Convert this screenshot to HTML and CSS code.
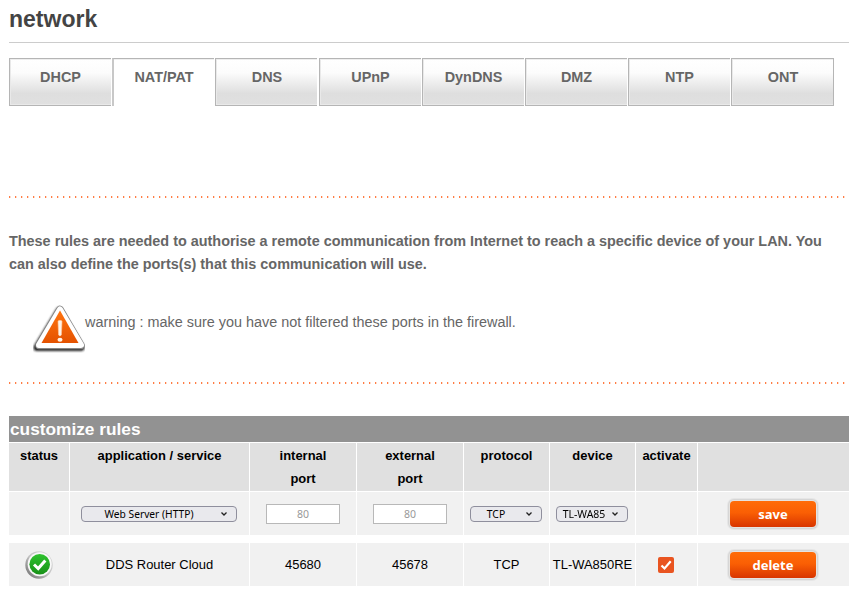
FILE: index.html
```html
<!DOCTYPE html>
<html lang="en">
<head>
<meta charset="utf-8">
<title>network</title>
<link rel="stylesheet" href="styles.css">
</head>
<body>
<h1>network</h1>
<nav class="tabs">
  <a>DHCP</a><a class="active">NAT/PAT</a><a class="after">DNS</a><a>UPnP</a><a>DynDNS</a><a>DMZ</a><a>NTP</a><a>ONT</a>
</nav>
<section class="intro">
  <svg class="dots" width="836" height="2"><path d="M0 1H836"/><path class="edge" d="M1 1H836"/></svg>
  <p class="lead">These rules are needed to authorise a remote communication from Internet to reach a specific device of your LAN. You can also define the ports(s) that this communication will use.</p>
  <div class="warning">
    <svg width="52" height="52" viewBox="0 0 52 52">
      <defs>
        <linearGradient id="wg" x1="0" y1="0" x2="0" y2="1"><stop offset="0" stop-color="#ff7410"/><stop offset="1" stop-color="#e45200"/></linearGradient>
        <filter id="blur" x="-20%" y="-20%" width="140%" height="140%"><feGaussianBlur stdDeviation="1.2"/></filter>
      </defs>
      <path d="M26 6 L48 42.500 H4 Z" fill="#222" stroke="#222" stroke-width="7" stroke-linejoin="round" filter="url(#blur)"/>
      <path d="M27 4.500 L48 40.500 H6 Z" fill="#888" stroke="#888" stroke-width="7.500" stroke-linejoin="round"/>
      <path d="M27 4.500 L48 40 H6 Z" fill="#fff" stroke="#fff" stroke-width="6" stroke-linejoin="round"/>
      <path d="M27 5.500 L45.500 38 H8.500 Z" fill="url(#wg)"/>
      <path d="M25 16 Q27 14.500 29 16 L28.400 30 Q27 32 25.600 30 Z" fill="#fff4e8" stroke="#ffc9a0" stroke-width=".6"/>
      <ellipse cx="27" cy="34.800" rx="2.500" ry="2" fill="#fff4e8"/>
    </svg>
    <span>warning : make sure you have not filtered these ports in the firewall.</span>
  </div>
  <svg class="dots" width="836" height="2"><path d="M0 1H836"/><path class="edge" d="M1 1H836"/></svg>
</section>
<h2>customize rules</h2>
<div class="row head">
  <div>status</div><div>application / service</div><div>internal<br>port</div><div>external<br>port</div><div>protocol</div><div>device</div><div>activate</div><div></div>
</div>
<div class="row">
  <div></div>
  <div><span class="select wide"><span>Web Server (HTTP)</span><svg width="8" height="6" viewBox="0 0 8 6"><path d="M1.500 1.500 L4 4 L6.500 1.500"/></svg></span></div>
  <div><span class="field">80</span></div>
  <div><span class="field">80</span></div>
  <div><span class="select"><span class="proto">TCP</span><svg width="8" height="6" viewBox="0 0 8 6"><path d="M1.500 1.500 L4 4 L6.500 1.500"/></svg></span></div>
  <div><span class="select"><span class="dev">TL-WA85</span><svg width="8" height="6" viewBox="0 0 8 6"><path d="M1.500 1.500 L4 4 L6.500 1.500"/></svg></span></div>
  <div></div>
  <div><button>save</button></div>
</div>
<div class="row rule">
  <div>
    <svg width="32" height="32" viewBox="0 0 32 32">
      <defs>
        <linearGradient id="gg" x1="0" y1="0" x2="0" y2="1"><stop offset="0" stop-color="#2fc32f"/><stop offset="1" stop-color="#189018"/></linearGradient>
        <linearGradient id="rg" x1="1" y1="0" x2="0" y2="1"><stop offset="0" stop-color="#ddd"/><stop offset=".5" stop-color="#c4c4c4"/><stop offset="1" stop-color="#666"/></linearGradient>
        <filter id="soft"><feGaussianBlur stdDeviation=".5"/></filter>
      </defs>
      <circle cx="16" cy="16" r="13.700" fill="url(#rg)" filter="url(#soft)"/>
      <circle cx="16.700" cy="15.300" r="12" fill="#f8f8f8"/>
      <circle cx="16.700" cy="15.300" r="10.300" fill="url(#gg)"/>
      <path d="M11 15.500 L15.200 19.500 L22.300 11.500" fill="none" stroke="#fff" stroke-width="3"/>
    </svg>
  </div>
  <div>DDS Router Cloud</div><div>45680</div><div>45678</div><div>TCP</div><div>TL-WA850RE</div>
  <div><span class="check"><svg width="16" height="16" viewBox="0 0 16 16"><path d="M3.500 8.500 L6.500 11.500 L12.700 4.300" fill="none" stroke="#fff" stroke-width="2.200"/></svg></span></div>
  <div><button>delete</button></div>
</div>
</body>
</html>
```
FILE: styles.css
```css
* { box-sizing: border-box; }
body {
  margin: 0;
  padding: 0 18px 0 9px;
  height: 597px;
  overflow: hidden;
  background: #fff;
  color: #666;
  font-family: "Liberation Sans", Arial, sans-serif;
  font-size: 14.420px;
}
h1 {
  margin: 0;
  height: 43px;
  padding-top: 5px;
  border-bottom: 1px solid #ccc;
  color: #444;
  font-size: 23px;
  line-height: 28px;
}
.tabs {
  display: grid;
  grid-template-columns: 103px 103px 104px repeat(4, 103px) 103px;
  margin-top: 15px;
  height: 48px;
}
.tabs a {
  margin-right: 1px;
  border: 1px solid #b5b5b5;
  border-right: 0;
  background: linear-gradient(#fff 0, #fcfcfc 30%, #dedede 75%, #e0e0e0 100%);
  box-shadow: inset 1px -1px 0 #e9e9e9, inset 0 1px 0 #eee;
  font-weight: bold;
  line-height: 36px;
  text-align: center;
}
.tabs .active {
  border-bottom: 0;
  border-left: 2px solid #c8c8c8;
  background: #fff;
  box-shadow: inset 0 1px 0 #f0f0f0;
}
.tabs .after { margin-right: 2px; padding-left: 1px; }
.tabs a:last-child {
  margin-right: 0;
  padding-left: 1px;
  border-right: 1px solid #b5b5b5;
}
.intro {
  display: flex;
  flex-direction: column;
  margin-top: 90px;
  height: 188px;
}
.dots { display: block; flex: none; }
.dots path { stroke: #ff7d45; stroke-width: 2; stroke-dasharray: 1 5; }
.dots .edge { stroke: #ffdccb; }
.intro > .dots:last-child { margin-top: auto; }
.lead {
  margin: 32px 0 0;
  font-weight: bold;
  line-height: 23px;
}
.warning {
  display: flex;
  margin: 29px 0 0 24px;
  line-height: 34px;
}
.warning svg { flex: none; }
h2 {
  margin: 32px 0 1px;
  height: 26px;
  padding-left: 1px;
  background: #929292;
  color: #fff;
  font-size: 17.280px;
  line-height: 27px;
}
.row {
  display: grid;
  grid-template-columns: 60px 179px 106px 106px 85px 85px 61px 151px;
  column-gap: 1px;
  height: 43px;
  color: #000;
  font-size: 12.960px;
  white-space: nowrap;
}
.row > div {
  display: flex;
  align-items: center;
  justify-content: center;
  background: #f1f1f1;
}
.head {
  height: 48px;
  margin-bottom: 1px;
  font-weight: bold;
}
.head > div {
  align-items: flex-start;
  padding-top: 1px;
  background: #e0e0e0;
  line-height: 23px;
  text-align: center;
}
.rule { margin-top: 8px; }
.select {
  display: flex;
  align-items: center;
  width: 72px;
  height: 16px;
  margin: 1px 1px 0 0;
  padding-right: 8px;
  border: 1px solid #8f8f9d;
  border-radius: 4px;
  background: #e9e9ed;
  font: 11.500px/14px "Noto Sans", sans-serif;
}
.select > span {
  flex: 1;
  display: flex;
  justify-content: center;
}
.select > .proto { transform: translateX(-2px) scaleX(.9); }
.select > .dev { transform: scaleX(.91); }
.wide { width: 156px; }
.wide > span { transform: translateX(-2px) scaleX(.89); }
.select path { fill: none; stroke: #222; stroke-width: 1.300; }
.field {
  width: 74px;
  height: 20px;
  margin-top: 1px;
  border: 1px solid #b8b8b8;
  background: #fff;
  color: #999;
  font: 10.500px/19px "Noto Sans", sans-serif;
  text-align: center;
}
button {
  width: 86px;
  height: 26px;
  margin: 1px 1px 0 0;
  padding: 0;
  border: 0;
  border-radius: 4px;
  background: linear-gradient(#ff6c08, #fa5f04 45%, #d83500);
  box-shadow: 0 0 0 1px #e6e3e0, 0 0 0 2px #d6d6d6, 0 0 0 3px #e6e6e6;
  color: #fff;
  font: bold 13px/27px "Noto Sans", sans-serif;
}
.check {
  display: block;
  width: 16px;
  height: 16px;
  margin: 1px 1px 0 0;
  border-radius: 2px;
  background: #e95420;
}
.check svg { display: block; }
```
